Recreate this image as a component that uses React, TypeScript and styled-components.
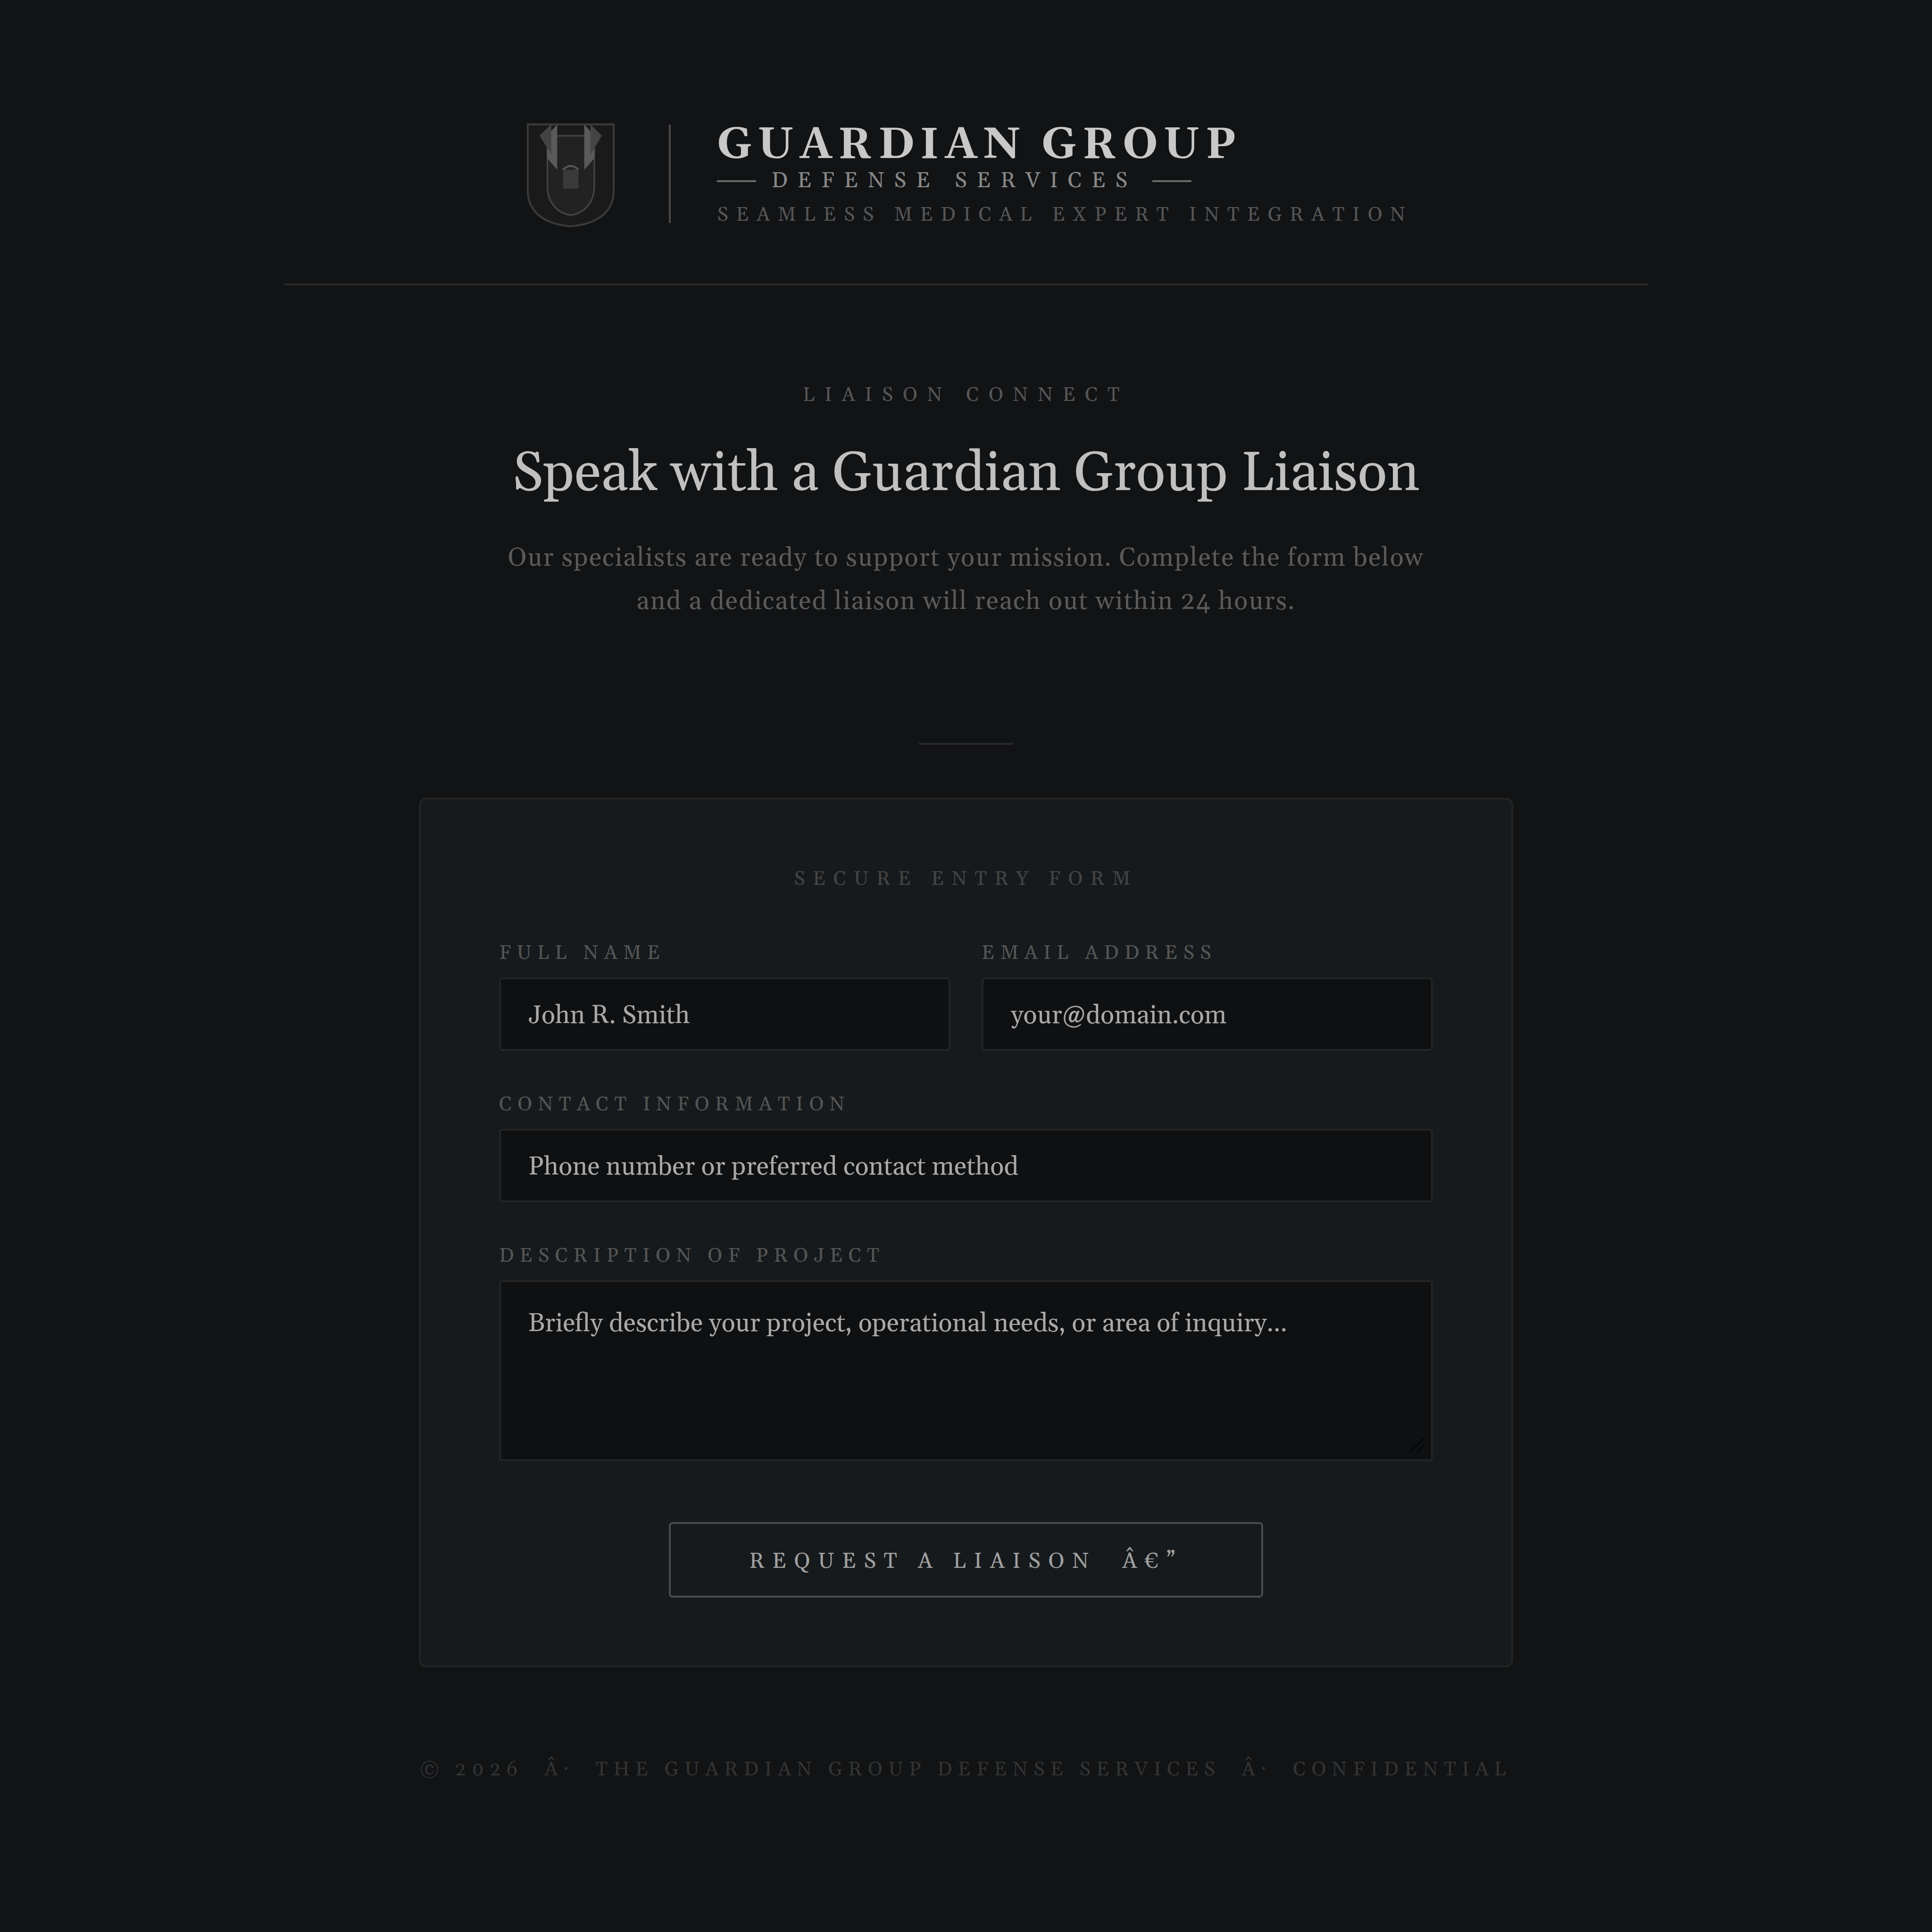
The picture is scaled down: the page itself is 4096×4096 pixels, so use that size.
import React from "react";
import styled, { createGlobalStyle } from "styled-components";

const serif = `Gelasio, Georgia, "Liberation Serif", serif`;

const GlobalStyle = createGlobalStyle`
  *, *::before, *::after {
    box-sizing: border-box;
  }
  body {
    margin: 0;
    background: #111315;
    font-family: ${serif};
  }
`;

const Page = styled.div`
  display: flex;
  flex-direction: column;
  align-items: center;
  min-height: 100vh;
  padding: 240px 120px;
  background: #111315;
`;

const Header = styled.header`
  display: flex;
  align-items: center;
  justify-content: center;
  gap: 98px;
  width: 100%;
  max-width: 2892px;
  padding-bottom: 105px;
  border-bottom: 4px solid #2a2a2a;
`;

const Crest = styled.svg`
  flex: none;
  width: 220px;
  height: 256px;
`;

const HeaderDivider = styled.span`
  flex: none;
  width: 4px;
  height: 209px;
  background: #4a4a4a;
`;

const Brand = styled.div`
  display: flex;
  flex-direction: column;
  padding-top: 4px;
`;

const BrandName = styled.div`
  font-size: 92px;
  font-weight: 700;
  line-height: 102px;
  letter-spacing: 0.128em;
  color: #c8c8c8;
`;

const BrandDivision = styled.div`
  display: flex;
  align-items: center;
  gap: 32px;
  margin-bottom: 20px;
  font-size: 46px;
  line-height: 50px;
  letter-spacing: 0.447em;
  color: #888;
`;

const Dash = styled.span`
  width: 83px;
  height: 4px;
  background: #6a6a6a;
`;

const Tagline = styled.div`
  font-size: 42px;
  line-height: 54px;
  letter-spacing: 0.388em;
  color: #555;
`;

const Intro = styled.section`
  display: flex;
  flex-direction: column;
  align-items: center;
  padding: 209px 0 254px;
  text-align: center;
`;

const Eyebrow = styled.p`
  margin: 0 0 73px;
  font-size: 42px;
  line-height: 48px;
  letter-spacing: 0.485em;
  color: #555;
`;

const Title = styled.h1`
  margin: 0 0 62px;
  font-size: 116px;
  font-weight: 400;
  line-height: 140px;
  color: #c0c0c0;
`;

const Lead = styled.p`
  max-width: 2000px;
  margin: 0;
  font-size: 54px;
  line-height: 92px;
  letter-spacing: 2px;
  color: #5a5a5a;
`;

const ShortRule = styled.hr`
  width: 200px;
  height: 4px;
  margin: 0 0 112px;
  border: 0;
  background: #2a2a2a;
`;

const Card = styled.form`
  display: flex;
  flex-direction: column;
  width: 100%;
  max-width: 2320px;
  padding: 147px 166px 144px;
  border: 4px solid #232323;
  border-radius: 16px;
  background: #161a1c;
`;

const CardTitle = styled.h2`
  margin: 0 0 111px;
  font-size: 42px;
  font-weight: 400;
  line-height: 44px;
  letter-spacing: 0.388em;
  text-align: center;
  color: #444;
`;

const Fields = styled.div`
  display: grid;
  grid-template-columns: 1fr 1fr;
  gap: 90px 66px;
`;

const Field = styled.div<{ $wide?: boolean }>`
  display: flex;
  flex-direction: column;
  gap: 27px;
  grid-column: ${(p) => (p.$wide ? "1 / -1" : "auto")};
`;

const Label = styled.label`
  font-size: 42px;
  line-height: 48px;
  letter-spacing: 0.288em;
  color: #555;
`;

const Input = styled.input`
  width: 100%;
  height: 156px;
  padding: 6px 58px 0;
  border: 4px solid #242424;
  border-radius: 8px;
  outline: none;
  background: #0e1012;
  font-family: ${serif};
  font-size: 54px;
  color: #a9a9a9;

  &::placeholder {
    color: #a9a9a9;
    opacity: 1;
  }
`;

const TextAreaFrame = styled.div`
  position: relative;
  display: flex;
`;

const TextArea = styled.textarea`
  width: 100%;
  height: 384px;
  padding: 45px 58px 42px;
  border: 4px solid #242424;
  border-radius: 8px;
  outline: none;
  resize: none;
  background: #0e1012;
  font-family: ${serif};
  font-size: 54px;
  line-height: 86px;
  color: #a9a9a9;

  &::placeholder {
    color: #a9a9a9;
    opacity: 1;
  }
`;

const Grip = styled.svg`
  position: absolute;
  right: 18px;
  bottom: 18px;
  width: 32px;
  height: 32px;
`;

const Submit = styled.button`
  align-self: center;
  height: 160px;
  margin-top: 129px;
  padding: 6px 166px 0;
  border: 4px solid #4a4a4a;
  border-radius: 8px;
  background: transparent;
  font-family: ${serif};
  font-size: 46px;
  letter-spacing: 0.355em;
  white-space: nowrap;
  color: #a0a0a0;
`;

const Footer = styled.footer`
  margin-top: 193px;
  font-size: 42px;
  line-height: 48px;
  letter-spacing: 0.288em;
  white-space: nowrap;
  color: #333;
`;

function CrestMark() {
  return (
    <Crest viewBox="71 41 806 937" aria-hidden="true">
      <path
        d="M140 127H808V640C808 795 700 900 474 919C248 900 140 795 140 640Z"
        fill="#1a1a1a"
        stroke="#3a3a3a"
        strokeWidth="15"
      />
      <path
        d="M293 216H657V610C657 735 577 818 474 832C371 818 293 735 293 610Z"
        fill="#222"
        stroke="#444"
        strokeWidth="12"
      />
      <path d="M369 127V480L291 391V216Z" fill="#5a5a5a" />
      <path d="M579 127V480L657 391V216Z" fill="#5a5a5a" />
      <path d="M323 127V362L232 215Z" fill="#444" />
      <path d="M627 127V362L716 215Z" fill="#444" />
      <rect x="414" y="480" width="120" height="147" rx="14" fill="#3a3a3a" />
      <path d="M414 480Q474 421 534 480" fill="none" stroke="#555" strokeWidth="14" />
    </Crest>
  );
}

export default function App() {
  return (
    <>
      <GlobalStyle />
      <Page>
        <Header>
          <CrestMark />
          <HeaderDivider />
          <Brand>
            <BrandName>GUARDIAN GROUP</BrandName>
            <BrandDivision>
              <Dash />
              <span>DEFENSE SERVICES</span>
              <Dash />
            </BrandDivision>
            <Tagline>SEAMLESS MEDICAL EXPERT INTEGRATION</Tagline>
          </Brand>
        </Header>

        <Intro>
          <Eyebrow>LIAISON CONNECT</Eyebrow>
          <Title>Speak with a Guardian Group Liaison</Title>
          <Lead>
            Our specialists are ready to support your mission. Complete the form below and a
            dedicated liaison will reach out within 24 hours.
          </Lead>
        </Intro>

        <ShortRule />

        <Card onSubmit={(e) => e.preventDefault()}>
          <CardTitle>SECURE ENTRY FORM</CardTitle>
          <Fields>
            <Field>
              <Label htmlFor="name">FULL NAME</Label>
              <Input id="name" type="text" placeholder="John R. Smith" />
            </Field>
            <Field>
              <Label htmlFor="email">EMAIL ADDRESS</Label>
              <Input id="email" type="email" placeholder="your@domain.com" />
            </Field>
            <Field $wide>
              <Label htmlFor="contact">CONTACT INFORMATION</Label>
              <Input
                id="contact"
                type="text"
                placeholder="Phone number or preferred contact method"
              />
            </Field>
            <Field $wide>
              <Label htmlFor="project">DESCRIPTION OF PROJECT</Label>
              <TextAreaFrame>
                <TextArea
                  id="project"
                  placeholder="Briefly describe your project, operational needs, or area of inquiry..."
                />
                <Grip viewBox="0 0 32 32" aria-hidden="true">
                  <path
                    d="M2 30L30 2M17 30L30 17"
                    fill="none"
                    stroke="#060709"
                    strokeWidth="4"
                    strokeLinecap="round"
                  />
                </Grip>
              </TextAreaFrame>
            </Field>
          </Fields>
          <Submit type="submit">{"REQUEST A LIAISON \u00a0\u00c2\u20ac\u201d"}</Submit>
        </Card>

        <Footer>
          {
            "\u00a9 2026 \u00a0\u00c2\u00b7 \u00a0THE GUARDIAN GROUP DEFENSE SERVICES \u00a0\u00c2\u00b7 \u00a0CONFIDENTIAL"
          }
        </Footer>
      </Page>
    </>
  );
}
